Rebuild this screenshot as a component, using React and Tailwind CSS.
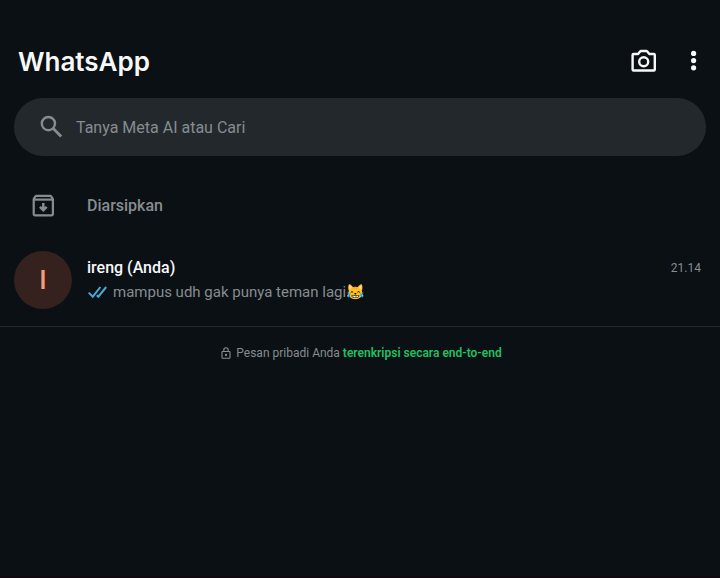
function CameraIcon() {
  return (
    <svg className="h-7 w-7" viewBox="0 0 28 28" fill="none" stroke="currentColor" strokeWidth="2.4" strokeLinejoin="round" aria-hidden="true">
      <path d="M3.6 7h4.5l2-2.5q.4-.5 1-.5h5.2q.6 0 1 .5l2 2.500h4.500a1 1 0 0 1 1 1v14.500a1 1 0 0 1-1 1H3.600a1 1 0 0 1-1-1V8a1 1 0 0 1 1-1Z" />
      <circle cx="13.7" cy="14.700" r="4.500" />
    </svg>
  );
}

function MoreIcon() {
  return (
    <svg className="h-7 w-3" viewBox="0 0 12 28" fill="currentColor" aria-hidden="true">
      <circle cx="5.6" cy="6.4" r="2.6" />
      <circle cx="5.6" cy="13.6" r="2.6" />
      <circle cx="5.6" cy="20.8" r="2.6" />
    </svg>
  );
}

function SearchIcon() {
  return (
    <svg className="h-6 w-6 shrink-0" viewBox="0 0 24 24" fill="none" stroke="currentColor" strokeWidth="2.4" aria-hidden="true">
      <circle cx="8.4" cy="8.6" r="6.6" />
      <path d="M13 13.2 21.2 21.4" strokeWidth="2.8" />
    </svg>
  );
}

function ArchiveIcon() {
  return (
    <svg className="h-6 w-6" viewBox="0 0 24 24" fill="none" stroke="currentColor" strokeWidth="2.2" strokeLinejoin="round" aria-hidden="true">
      <path d="M2.7 5 4.4 2.4q.4-.6 1.100-.6h13.600q.7 0 1.100.6L21.900 5v15a1.400 1.400 0 0 1-1.400 1.400H4.100A1.400 1.400 0 0 1 2.700 20Z" />
      <path d="M2.7 5.600h19.200" />
      <path d="M12.300 9v7M8.900 12.800l3.400 3.400 3.400-3.400" strokeWidth="2.5" strokeLinejoin="miter" />
    </svg>
  );
}

function ReadIcon() {
  return (
    <svg className="h-4 w-5 shrink-0 text-[#4aa9cf]" viewBox="0 0 20 16" fill="none" stroke="currentColor" strokeWidth="2" role="img" aria-label="Dibaca">
      <path d="M1.7 8.6 5.8 12.7 13.4 3" />
      <path d="M9.8 11.2l1.5 1.5L19.2 3" />
    </svg>
  );
}

function LockIcon() {
  return (
    <svg className="h-3 w-3 shrink-0" viewBox="0 0 12 12" fill="none" stroke="currentColor" strokeWidth="1.1" aria-hidden="true">
      <rect x="2" y="4.5" width="8" height="6.8" rx="0.8" />
      <path d="M3.8 4.5V3a2.2 2.2 0 0 1 4.4 0v1.5" />
      <circle cx="6" cy="7.9" r="0.6" fill="currentColor" />
    </svg>
  );
}

export default function App() {
  return (
    <div className="flex min-h-screen flex-col border-b-2 border-[#100a0e] bg-[#0b1014] font-['Roboto',sans-serif] text-[#868c90]">
      <header className="flex items-center justify-between pt-10 pr-5 pl-[18px] text-[#f7f8fa]">
        <h1 className="pt-0.5 font-['Inter',sans-serif] text-[26px] leading-10 font-semibold">WhatsApp</h1>
        <div className="flex items-center gap-[30px]">
          <button type="button" aria-label="Kamera"><CameraIcon /></button>
          <button type="button" aria-label="Opsi lainnya"><MoreIcon /></button>
        </div>
      </header>

      <label className="mx-3.5 mt-4 flex h-[58px] items-center gap-3 rounded-full bg-[#23282c] pr-6 pl-[26px] text-[#868c90]">
        <SearchIcon />
        <input
          type="search"
          aria-label="Cari"
          placeholder="Tanya Meta AI atau Cari"
          className="min-w-0 flex-1 bg-transparent pt-0.5 text-base outline-none placeholder:text-[#868c90]"
        />
      </label>

      <main>
        <a href="#arsip" className="mt-[21px] flex h-[58px] items-center gap-[15px] px-3.5 font-medium">
          <span className="flex w-[58px] justify-center"><ArchiveIcon /></span>
          <span className="text-base">Diarsipkan</span>
        </a>

        <a href="#chat" className="flex items-center gap-[15px] border-b border-[#24292c] px-3.5 pt-4 pb-[17px]">
          <span className="flex h-[58px] w-[58px] shrink-0 items-center justify-center rounded-full bg-[#35211d] text-[26px] font-medium text-[#fa9a7c]">
            I
          </span>
          <div className="min-w-0 flex-1">
            <div className="flex items-center justify-between pr-[5px]">
              <h2 className="text-base leading-6 font-medium text-[#f7f8fa]">ireng (Anda)</h2>
              <time className="text-xs">21.14</time>
            </div>
            <p className="flex items-center gap-1.5 text-[15px] leading-6">
              <ReadIcon />
              <span>mampus udh gak punya teman lagi😹</span>
            </p>
          </div>
        </a>

        <p className="mt-[17px] flex items-center justify-center gap-1 pl-0.5 text-xs leading-[18px]">
          <LockIcon />
          <span>
            Pesan pribadi Anda <a href="#enkripsi" className="font-semibold text-[#21c063]">terenkripsi secara end-to-end</a>
          </span>
        </p>
      </main>
    </div>
  );
}
